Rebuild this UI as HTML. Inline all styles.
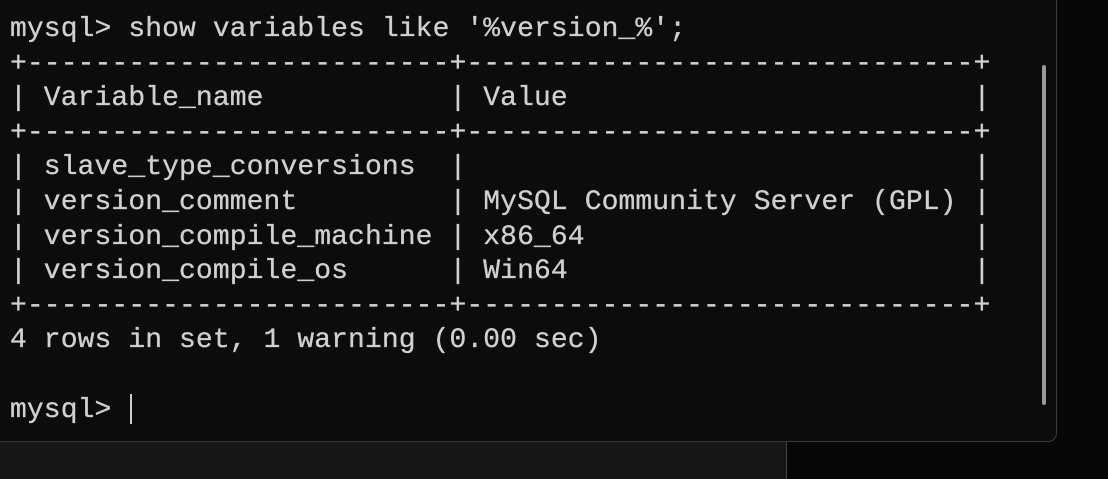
<!DOCTYPE html>
<html><head><style>
html,body{margin:0;padding:0;width:1108px;height:479px;overflow:hidden;background:#070707;}
.bl{position:absolute;left:0;top:441px;width:786px;height:38px;background:#171717;border-right:1px solid #444;}
.win{position:absolute;left:-10px;top:-20px;width:1065px;height:460px;background:#0c0c0c;border:1px solid #3a3a3a;border-radius:9px;}
.sb{position:absolute;left:1042px;top:65px;width:4px;height:340px;background:#9a9a9a;border-radius:2px;}
pre{position:absolute;left:10px;top:13px;margin:0;font-family:"Liberation Mono",monospace;font-size:28px;line-height:34.6px;color:#d0d0d0;letter-spacing:0.1px;-webkit-text-stroke:0.3px #d0d0d0;}
.cur{display:inline-block;width:2px;height:30px;background:#ccc;vertical-align:-7px;margin-left:2px;}
</style></head><body>
<div class="bl"></div>
<div class="win"></div>
<div class="sb"></div>
<pre>mysql&gt; show variables like '%version_%';
+-------------------------+------------------------------+
| Variable_name           | Value                        |
+-------------------------+------------------------------+
| slave_type_conversions  |                              |
| version_comment         | MySQL Community Server (GPL) |
| version_compile_machine | x86_64                       |
| version_compile_os      | Win64                        |
+-------------------------+------------------------------+
4 rows in set, 1 warning (0.00 sec)

mysql&gt; <span class="cur"></span></pre>
</body></html>
